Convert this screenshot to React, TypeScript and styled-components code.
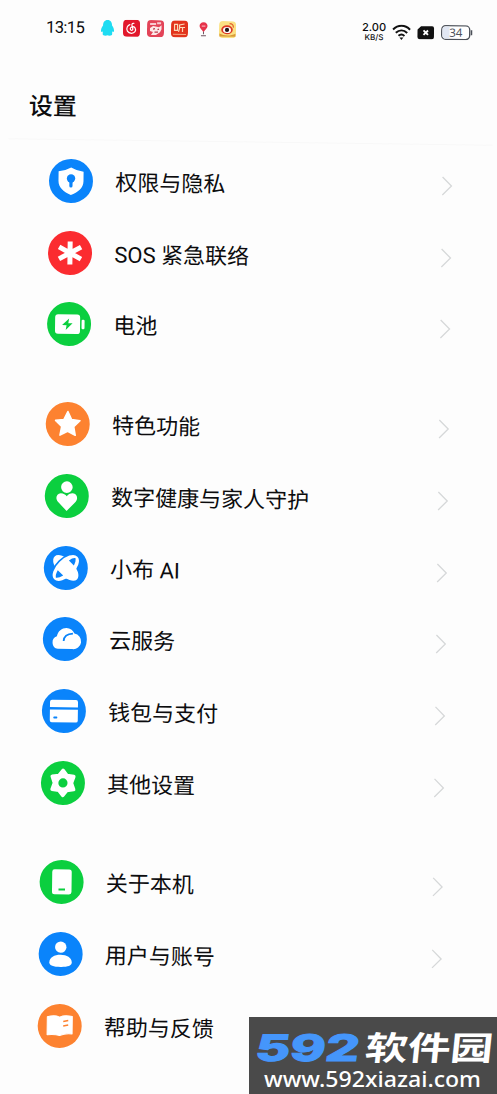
import React from 'react';
import styled, { createGlobalStyle } from 'styled-components';

const GlobalStyle = createGlobalStyle`
  * { box-sizing: border-box; }
  html, body { margin: 0; padding: 0; background: #fdfdfd; overflow: hidden; }
  body { font-family: Roboto, "Noto Sans CJK SC", sans-serif; color: #0c0c0e; }
`;

const Page = styled.div`
  position: relative;
  width: 497px;
  height: 1094px;
  overflow: hidden;
  background: #fdfdfd;
`;

const Screen = styled.div`
  display: flex;
  flex-direction: column;
  transform: rotate(0.766deg);
  transform-origin: 71px 180px;
`;

const StatusBar = styled.header`
  display: flex;
  align-items: center;
  justify-content: space-between;
  height: 55px;
  padding: 0 26px 0 44px;
`;

const StatusGroup = styled.div<{ $gap: number }>`
  display: flex;
  align-items: center;
  gap: ${(p) => p.$gap}px;
`;

const Clock = styled.span`
  width: 39px;
  margin-right: 7px;
  font-size: 16.5px;
  line-height: 20px;
  letter-spacing: -0.6px;
  white-space: nowrap;
`;

const Speed = styled.div`
  display: flex;
  flex-direction: column;
  align-items: center;
  width: 24px;
  font-family: Inter, "Noto Sans", sans-serif;
  font-weight: 500;
`;

const SpeedValue = styled.span`
  font-size: 11px;
  line-height: 11px;
`;

const SpeedUnit = styled.span`
  font-size: 8px;
  line-height: 8px;
`;

const Title = styled.h1`
  height: 84px;
  margin: 0;
  padding: 33.5px 28px 0;
  font-size: 24px;
  font-weight: 500;
  line-height: 36px;
`;

const Divider = styled.hr`
  width: 484px;
  height: 1px;
  margin: 0 0 5px 8px;
  border: 0;
  background: #f8f8f8;
`;

const Group = styled.ul`
  margin: 0 0 27.7px;
  padding: 0;
  list-style: none;
`;

const Row = styled.li`
  display: flex;
  align-items: center;
  height: 71.8px;
  padding: 0 44.5px 0 49px;
`;

const Badge = styled.span<{ $color: string }>`
  display: flex;
  flex: none;
  width: 44px;
  height: 44px;
  border-radius: 50%;
  background: ${(p) => p.$color};
`;

const Label = styled.span`
  flex: 1;
  padding: 4px 0 0 22.3px;
  font-size: 22px;
  line-height: 32px;
  white-space: nowrap;
`;

const Watermark = styled.div`
  position: absolute;
  right: 0;
  bottom: 0;
  width: 248px;
  height: 77px;
  background: #4a4a4a;
`;

const blue = '#0a84fb';
const green = '#0bcf3f';
const orange = '#fd8230';
const red = '#fb2c30';

type IconName =
  | 'shield' | 'sos' | 'battery' | 'star' | 'health' | 'ai'
  | 'cloud' | 'wallet' | 'gear' | 'phone' | 'user' | 'book';

const glyphs: Record<IconName, (c: string) => React.ReactNode> = {
  shield: (c) => (
    <>
      <path d="M22 8.500 Q28 12 34.500 12.500 V22 C34.500 29 29 33 22 36 C15 33 9.500 29 9.500 22 V12.500 Q16 12 22 8.500Z" fill="#fff" />
      <circle cx="22" cy="19.500" r="4.200" fill={c} />
      <path d="M22 21V27" stroke={c} strokeWidth="3.200" strokeLinecap="round" />
    </>
  ),
  sos: () => (
    <path d="M22 10.500V33.500M11 16L33 28M33 16L11 28" stroke="#fff" strokeWidth="5" />
  ),
  battery: (c) => (
    <>
      <rect x="8" y="12.500" width="25" height="19.500" rx="3" fill="#fff" />
      <rect x="34.500" y="17.500" width="3" height="9.500" rx="1.200" fill="#fff" />
      <path d="M22 16.500L15 23.200H19.500L18.700 28L25.500 21.200H21.200Z" fill={c} />
    </>
  ),
  star: () => (
    <path d="M22 9.500L25.800 17.500L34.200 18.600L28 24.600L29.600 33.200L22 29.200L14.400 33.200L16 24.600L9.800 18.600L18.200 17.500Z" fill="#fff" stroke="#fff" strokeWidth="1.600" strokeLinejoin="round" />
  ),
  health: () => (
    <>
      <circle cx="22" cy="13.200" r="5.800" fill="#fff" />
      <path d="M22 37L13.200 27.800C10.300 24.600 11.600 19.600 16 19.300C18.800 19.300 20.600 20.600 22 22.200C23.400 20.600 25.200 19.300 28 19.300C32.400 19.600 33.700 24.600 30.800 27.800Z" fill="#fff" />
    </>
  ),
  ai: (c) => (
    <>
      <ellipse cx="22" cy="22" rx="16" ry="8.200" transform="rotate(45 22 22)" fill="#fff" />
      <path d="M7 22A15 7.500 0 0 1 37 22" transform="rotate(-45 22 22)" fill="none" stroke={c} strokeWidth="5.500" />
      <ellipse cx="22" cy="22" rx="15" ry="7.500" transform="rotate(-45 22 22)" fill="#fff" stroke="#fff" strokeWidth="2.400" />
      <path d="M25 14.500Q29 11.500 31.500 12Q32.300 15 30 19.500Z" fill={c} />
      <path d="M14 24.500Q11.500 29 12.200 31.800Q15 32.300 19.500 29.500Z" fill={c} />
    </>
  ),
  cloud: (c) => (
    <>
      <path d="M15 32A6.500 6.500 0 0 1 14 19.500C15 14 19 11 23.500 11C27 11 30 13 31.500 16.500A7.800 7.800 0 0 1 29.500 32Z" fill="#fff" />
      <path d="M20.800 24C21 19.500 24.500 16.800 30 16.500" fill="none" stroke={c} strokeWidth="1.800" />
    </>
  ),
  wallet: (c) => (
    <>
      <path d="M10 11H34A2 2 0 0 1 36 13V18.300H8V13A2 2 0 0 1 10 11Z" fill="#fff" />
      <path d="M8 20.700H36V31.500A2 2 0 0 1 34 33.500H10A2 2 0 0 1 8 31.500Z" fill="#fff" />
      <rect x="11.500" y="27.700" width="4" height="2" rx="0.800" fill={c} />
    </>
  ),
  gear: (c) => (
    <>
      <path d="M22 9.500L26 14.500L32.800 15.500L30.500 22L32.800 28.500L26 29.500L22 34.500L18 29.500L11.200 28.500L13.500 22L11.200 15.500L18 14.500Z" fill="#fff" stroke="#fff" strokeWidth="3.500" strokeLinejoin="round" />
      <circle cx="22" cy="22" r="4.600" fill={c} />
    </>
  ),
  phone: (c) => (
    <>
      <rect x="12.500" y="9.500" width="19.500" height="25" rx="2.500" fill="#fff" />
      <rect x="19" y="28.500" width="6.500" height="2" fill={c} />
    </>
  ),
  user: () => (
    <>
      <circle cx="22" cy="15.200" r="5.700" fill="#fff" />
      <path d="M10.800 30.500C10.800 25.500 16 22.800 22 22.800C28 22.800 33.200 25.500 33.200 30.500C33.200 34 29 35 22 35C15 35 10.800 34 10.800 30.500Z" fill="#fff" />
    </>
  ),
  book: (c) => (
    <>
      <path d="M9.500 13C14 11.500 18.500 11.500 21.800 13.200C25.500 11.500 30 11.500 34.500 12.500V30C30 29.500 26 30 22 31.500C18 30.500 14 30.500 9.500 31Z" fill="#fff" stroke="#fff" strokeWidth="1" strokeLinejoin="round" />
      <path d="M25.500 17.500L30.500 16.500M25.500 22L30.500 21" stroke={c} strokeWidth="1.500" />
    </>
  ),
};

const groups: { icon: IconName; color: string; label: string }[][] = [
  [
    { icon: 'shield', color: blue, label: '权限与隐私' },
    { icon: 'sos', color: red, label: 'SOS 紧急联络' },
    { icon: 'battery', color: green, label: '电池' },
  ],
  [
    { icon: 'star', color: orange, label: '特色功能' },
    { icon: 'health', color: green, label: '数字健康与家人守护' },
    { icon: 'ai', color: blue, label: '小布 AI' },
    { icon: 'cloud', color: blue, label: '云服务' },
    { icon: 'wallet', color: blue, label: '钱包与支付' },
    { icon: 'gear', color: green, label: '其他设置' },
  ],
  [
    { icon: 'phone', color: green, label: '关于本机' },
    { icon: 'user', color: blue, label: '用户与账号' },
    { icon: 'book', color: orange, label: '帮助与反馈' },
  ],
];

const Chevron = () => (
  <svg width="12" height="20" viewBox="0 0 12 20" fill="none">
    <path d="M1.500 1L10.500 10L1.500 19" stroke="#d6d8d9" strokeWidth="1.300" />
  </svg>
);

const AppIcons = () => (
  <StatusGroup $gap={7}>
    <svg width="17" height="17" viewBox="0 0 17 17">
      <path d="M8.500 0.500C11.500 0.500 13 2.800 13 6C14.500 8 15.500 10.500 14.800 12.500L13.300 12C13 13.500 13.500 14.500 13 15.500C11.500 16.500 9.500 16.300 8.500 15.800C7.500 16.300 5.500 16.500 4 15.500C3.500 14.500 4 13.500 3.700 12L2.200 12.500C1.500 10.500 2.500 8 4 6C4 2.800 5.500 0.500 8.500 0.500Z" fill="#1fdcf2" />
    </svg>
    <svg width="17" height="17" viewBox="0 0 17 17">
      <rect width="17" height="17" rx="4" fill="#e2182c" />
      <path d="M10.800 3.500C8.800 3 8.600 5 9.100 6.500L9.800 9C10 11 7.300 11 7.200 9C7.200 7 10.500 6 12 8C13.700 11 11.500 13.500 8.500 13.500C4.500 13.500 3 10 4.200 7.300C4.800 6 5.600 5.300 6.800 4.800" fill="none" stroke="#fff" strokeWidth="1.200" strokeLinecap="round" />
    </svg>
    <svg width="17" height="17" viewBox="0 0 17 17">
      <rect width="17" height="17" rx="4" fill="#e34458" />
      <path d="M3 3H9V5H3ZM10 2H14V4H10Z" fill="#f9c9cf" />
      <path d="M3 8L6 6L12 7L14.500 5V9L13 12L9 15H4L6 12L3 11Z" fill="#fce8e8" />
      <path d="M6 9L8 8.500M10.500 9.500L12 9M7.500 12H11" stroke="#b9384a" strokeWidth="1.200" />
    </svg>
    <svg width="17" height="17" viewBox="0 0 17 17">
      <rect width="17" height="17" rx="4" fill="#e2341c" />
      <path d="M3.500 4H6.500V10H3.500ZM13.500 3.500L8.500 4.500V8L7.500 11.500M8.500 7H14M11.500 7V11.500" fill="none" stroke="#fbd9b8" strokeWidth="1.200" />
      <path d="M2 14H15" stroke="#f5aa86" strokeWidth="1" />
    </svg>
    <svg width="17" height="17" viewBox="0 0 17 17">
      <path d="M8.500 1.500C11 1.500 12.500 3.300 12.500 5.300C12.500 7.500 10 9 8.500 11.500C7 9 4.500 7.500 4.500 5.300C4.500 3.300 6 1.500 8.500 1.500Z" fill="#e6334b" />
      <path d="M6.700 5.300H10.300" stroke="#f8a9b2" strokeWidth="1.200" />
      <path d="M8.500 11V13.500M6 15H11" stroke="#6d5560" strokeWidth="1" />
    </svg>
    <svg width="17" height="17" viewBox="0 0 17 17">
      <rect width="17" height="17" rx="4" fill="#fbe184" />
      <ellipse cx="8" cy="8.700" rx="5.800" ry="4.400" fill="#dc3a24" />
      <ellipse cx="8" cy="9" rx="4" ry="3" fill="#fff" />
      <circle cx="8" cy="8.900" r="2.100" fill="#251714" />
      <path d="M10.500 2.500Q14.500 2.500 14.300 6.500" fill="none" stroke="#e2632c" strokeWidth="1.300" />
      <path d="M0.500 12.500C5 15 12 15 16.500 12.500V15.500H0.500Z" fill="#d99a36" />
    </svg>
  </StatusGroup>
);

const SystemIcons = () => (
  <StatusGroup $gap={6}>
    <Speed>
      <SpeedValue>2.00</SpeedValue>
      <SpeedUnit>KB/S</SpeedUnit>
    </Speed>
    <svg width="19" height="16" viewBox="0 0 19 16" fill="none" stroke="#111" strokeWidth="2">
      <path d="M1 5.200C6 0.200 13 0.200 18 5.200M3.800 8.500C7.200 5.200 11.800 5.200 15.200 8.500M6.500 11.500C8.300 9.900 10.700 9.900 12.500 11.500" />
      <path d="M7.500 13L9.500 15.600L11.500 13Z" fill="#111" stroke="none" />
    </svg>
    <svg width="18" height="14" viewBox="0 0 18 14">
      <path d="M4 0.500H15Q17 0.500 17 2.500V11.500Q17 13.500 15 13.500H2.500Q0.500 13.500 0.500 11.500V4Z" fill="#111" />
      <path d="M6.500 4.700L11 9.200M11 4.700L6.500 9.200" stroke="#fff" strokeWidth="1.900" />
    </svg>
    <svg width="32" height="15" viewBox="0 0 32 15">
      <rect x="0.700" y="0.700" width="28" height="13.600" rx="4" fill="#fff" stroke="#4b5058" strokeWidth="1.300" />
      <path d="M4.700 1.400H8.500V13.600H4.700Q1.400 13.600 1.400 10.500V4.500Q1.400 1.400 4.700 1.400Z" fill="#e1e7f3" />
      <path d="M30.500 5V10" stroke="#4b5058" strokeWidth="1.500" />
      <text x="14.900" y="11.700" textAnchor="middle" fontFamily="Noto Sans" fontSize="11.500" fill="#50545c">34</text>
    </svg>
  </StatusGroup>
);

const SiteMark = () => (
  <svg width="248" height="77" viewBox="0 0 248 77">
    <text transform="translate(5 44.300) skewX(-8)" fontFamily="Inter" fontWeight="800" fontSize="36.500" fill="#4596fb" stroke="#4596fb" strokeWidth="1" textLength="104" lengthAdjust="spacingAndGlyphs">592</text>
    <text transform="translate(115 42.500) skewX(-6)" fontFamily="Noto Sans CJK SC" fontWeight="700" fontSize="33" fill="#fff" textLength="128" lengthAdjust="spacingAndGlyphs">软件园</text>
    <text x="15" y="69.500" fontFamily="Noto Sans" fontWeight="500" fontSize="22" fill="#fff" textLength="217" lengthAdjust="spacingAndGlyphs">www.592xiazai.com</text>
  </svg>
);

export default function App() {
  return (
    <Page>
      <GlobalStyle />
      <Screen>
        <StatusBar>
          <StatusGroup $gap={7}>
            <Clock>13:15</Clock>
            <AppIcons />
          </StatusGroup>
          <SystemIcons />
        </StatusBar>
        <Title>设置</Title>
        <Divider />
        {groups.map((rows) => (
          <Group key={rows[0].icon}>
            {rows.map(({ icon, color, label }) => (
              <Row key={icon}>
                <Badge $color={color}>
                  <svg width="44" height="44" viewBox="0 0 44 44">{glyphs[icon](color)}</svg>
                </Badge>
                <Label>{label}</Label>
                <Chevron />
              </Row>
            ))}
          </Group>
        ))}
      </Screen>
      <Watermark>
        <SiteMark />
      </Watermark>
    </Page>
  );
}
